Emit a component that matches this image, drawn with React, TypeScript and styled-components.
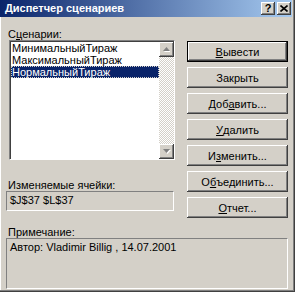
import React from "react";
import styled, { createGlobalStyle } from "styled-components";

const GlobalStyle = createGlobalStyle`
  html, body {
    margin: 0;
    padding: 0;
    background: #d4d0c8;
  }
  body {
    font-family: "Liberation Sans", Arial, sans-serif;
    font-size: 11px;
    color: #000;
  }
`;

const scenarios = ["МинимальныйТираж", "МаксимальныйТираж", "НормальныйТираж"];

const Window = styled.div`
  width: 295px;
  height: 292px;
  box-sizing: border-box;
  padding: 0 3px 3px 0;
  background: #d4d0c8;
  box-shadow: inset -1px -1px #404040, inset -2px -2px #808080, inset 1px 0 #fff;
  display: flex;
  flex-direction: column;
`;

const TitleBar = styled.div`
  height: 18px;
  display: flex;
  align-items: center;
  padding: 0 1px 0 5px;
  background: linear-gradient(to right, #0a246a, #a6caf0);
`;

const Title = styled.div`
  color: #fff;
  font-weight: bold;
  font-size: 11px;
  line-height: 11px;
`;

const TitleButtons = styled.div`
  margin-left: auto;
  display: flex;
  gap: 2px;
`;

const TitleButton = styled.div`
  width: 14px;
  height: 13px;
  box-sizing: border-box;
  background: #d4d0c8;
  box-shadow: inset -1px -1px #404040, inset 1px 1px #fff, inset -2px -2px #808080;
  display: flex;
  align-items: center;
  justify-content: center;
  font-weight: bold;
  font-size: 11px;
  line-height: 11px;
`;

const Body = styled.div`
  flex: 1;
  padding: 12px 4px 0 8px;
  display: flex;
  flex-direction: column;
`;

const TopRow = styled.div`
  display: flex;
  gap: 14px;
`;

const LeftColumn = styled.div`
  width: 165px;
  display: flex;
  flex-direction: column;
`;

const Label = styled.div<{ $top?: number }>`
  height: 11px;
  line-height: 11px;
  margin-top: ${(p) => p.$top ?? 0}px;
  white-space: nowrap;
`;

const ListBox = styled.div`
  height: 120px;
  margin: 0 -2px 0 1px;
  box-sizing: border-box;
  border-style: solid;
  border-width: 1px;
  border-color: #808080 #fff #fff #808080;
  box-shadow: inset 1px 1px #404040;
  background: #fff;
  display: flex;
`;

const Items = styled.div`
  flex: 1;
  padding: 1px 0 0 1px;
`;

const Item = styled.div<{ $selected?: boolean }>`
  height: 12px;
  line-height: 12px;
  padding-left: 1px;
  white-space: nowrap;
  background: ${(p) => (p.$selected ? "#0a246a" : "transparent")};
  color: ${(p) => (p.$selected ? "#fff" : "#000")};
  outline: ${(p) => (p.$selected ? "1px dotted #d4d0c8" : "none")};
  outline-offset: -1px;
`;

const ScrollBar = styled.div`
  width: 15px;
  margin: 1px 0 0 0;
  display: flex;
  flex-direction: column;
  justify-content: space-between;
  background: repeating-conic-gradient(#fff 0 25%, #d4d0c8 0 50%) 0 0 / 2px 2px;
`;

const ArrowButton = styled.div`
  height: 15px;
  background: #d4d0c8;
  box-shadow: inset -1px -1px #404040, inset 1px 1px #fff, inset -2px -2px #808080;
  display: flex;
  align-items: center;
  justify-content: center;
`;

const Field = styled.div`
  height: 20px;
  margin: 0 -1px 0 -2px;
  padding: 0 3px;
  box-sizing: border-box;
  border-style: solid;
  border-width: 1px;
  border-color: #808080 #fff #fff #808080;
  line-height: 17px;
  white-space: nowrap;
`;

const ButtonColumn = styled.div`
  width: 101px;
  padding-top: 12px;
  display: flex;
  flex-direction: column;
  gap: 5px;
`;

const Button = styled.div<{ $default?: boolean }>`
  height: 21px;
  box-sizing: border-box;
  display: flex;
  align-items: center;
  justify-content: center;
  background: #d4d0c8;
  border: 1px solid ${(p) => (p.$default ? "#000" : "transparent")};
  box-shadow: ${(p) =>
    p.$default
      ? "inset -1px -1px #404040, inset 1px 1px #fff, inset -2px -2px #808080"
      : "none"};
  ${(p) =>
    !p.$default &&
    `
    border: none;
    box-shadow: inset -1px -1px #404040, inset 1px 1px #fff, inset -2px -2px #808080;
  `}
  white-space: nowrap;

  u {
    text-decoration: underline;
  }
`;

const NoteArea = styled.div`
  height: 51px;
  margin: 0 0 0 -2px;
  padding: 2px 3px;
  box-sizing: border-box;
  border-style: solid;
  border-width: 1px;
  border-color: #808080 #fff #fff #808080;
  line-height: 12px;
  white-space: nowrap;
`;

const UpArrow = () => (
  <svg width="7" height="5" viewBox="0 0 7 5">
    <path d="M4 1 L8 5 L1 5 Z" fill="#fff" />
    <path d="M3.5 0 L7 4 L0 4 Z" fill="#808080" />
  </svg>
);

const DownArrow = () => (
  <svg width="8" height="5" viewBox="0 0 8 5">
    <path d="M1 1 L8 1 L4.5 5 Z" fill="#fff" />
    <path d="M0 0 L7 0 L3.5 4 Z" fill="#808080" />
  </svg>
);

const CloseGlyph = () => (
  <svg width="8" height="7" viewBox="0 0 8 7">
    <path d="M0.5 0.5 L7.5 6.5 M7.5 0.5 L0.5 6.5" stroke="#000" strokeWidth="1.6" />
  </svg>
);

const App = () => {
  return (
    <>
      <GlobalStyle />
      <Window>
        <TitleBar>
          <Title>Диспетчер сценариев</Title>
          <TitleButtons>
            <TitleButton>?</TitleButton>
            <TitleButton>
              <CloseGlyph />
            </TitleButton>
          </TitleButtons>
        </TitleBar>

        <Body>
          <TopRow>
            <LeftColumn>
              <Label>
                С<u>ц</u>енарии:
              </Label>
              <ListBox>
                <Items>
                  {scenarios.map((s, i) => (
                    <Item key={s} $selected={i === 2}>
                      {s}
                    </Item>
                  ))}
                </Items>
                <ScrollBar>
                  <ArrowButton>
                    <UpArrow />
                  </ArrowButton>
                  <ArrowButton>
                    <DownArrow />
                  </ArrowButton>
                </ScrollBar>
              </ListBox>
              <Label $top={20}>Изменяемые ячейки:</Label>
              <Field>$J$37 $L$37</Field>
            </LeftColumn>

            <ButtonColumn>
              <Button $default>
                <u>В</u>ывести
              </Button>
              <Button>Закрыть</Button>
              <Button>
                Доб<u>а</u>вить...
              </Button>
              <Button>
                <u>У</u>далить
              </Button>
              <Button>
                И<u>з</u>менить...
              </Button>
              <Button>
                О<u>б</u>ъединить...
              </Button>
              <Button>
                <u>О</u>тчет...
              </Button>
            </ButtonColumn>
          </TopRow>

          <Label $top={9}>Примечание:</Label>
          <NoteArea>Автор: Vladimir Billig , 14.07.2001</NoteArea>
        </Body>
      </Window>
    </>
  );
};

export default App;
